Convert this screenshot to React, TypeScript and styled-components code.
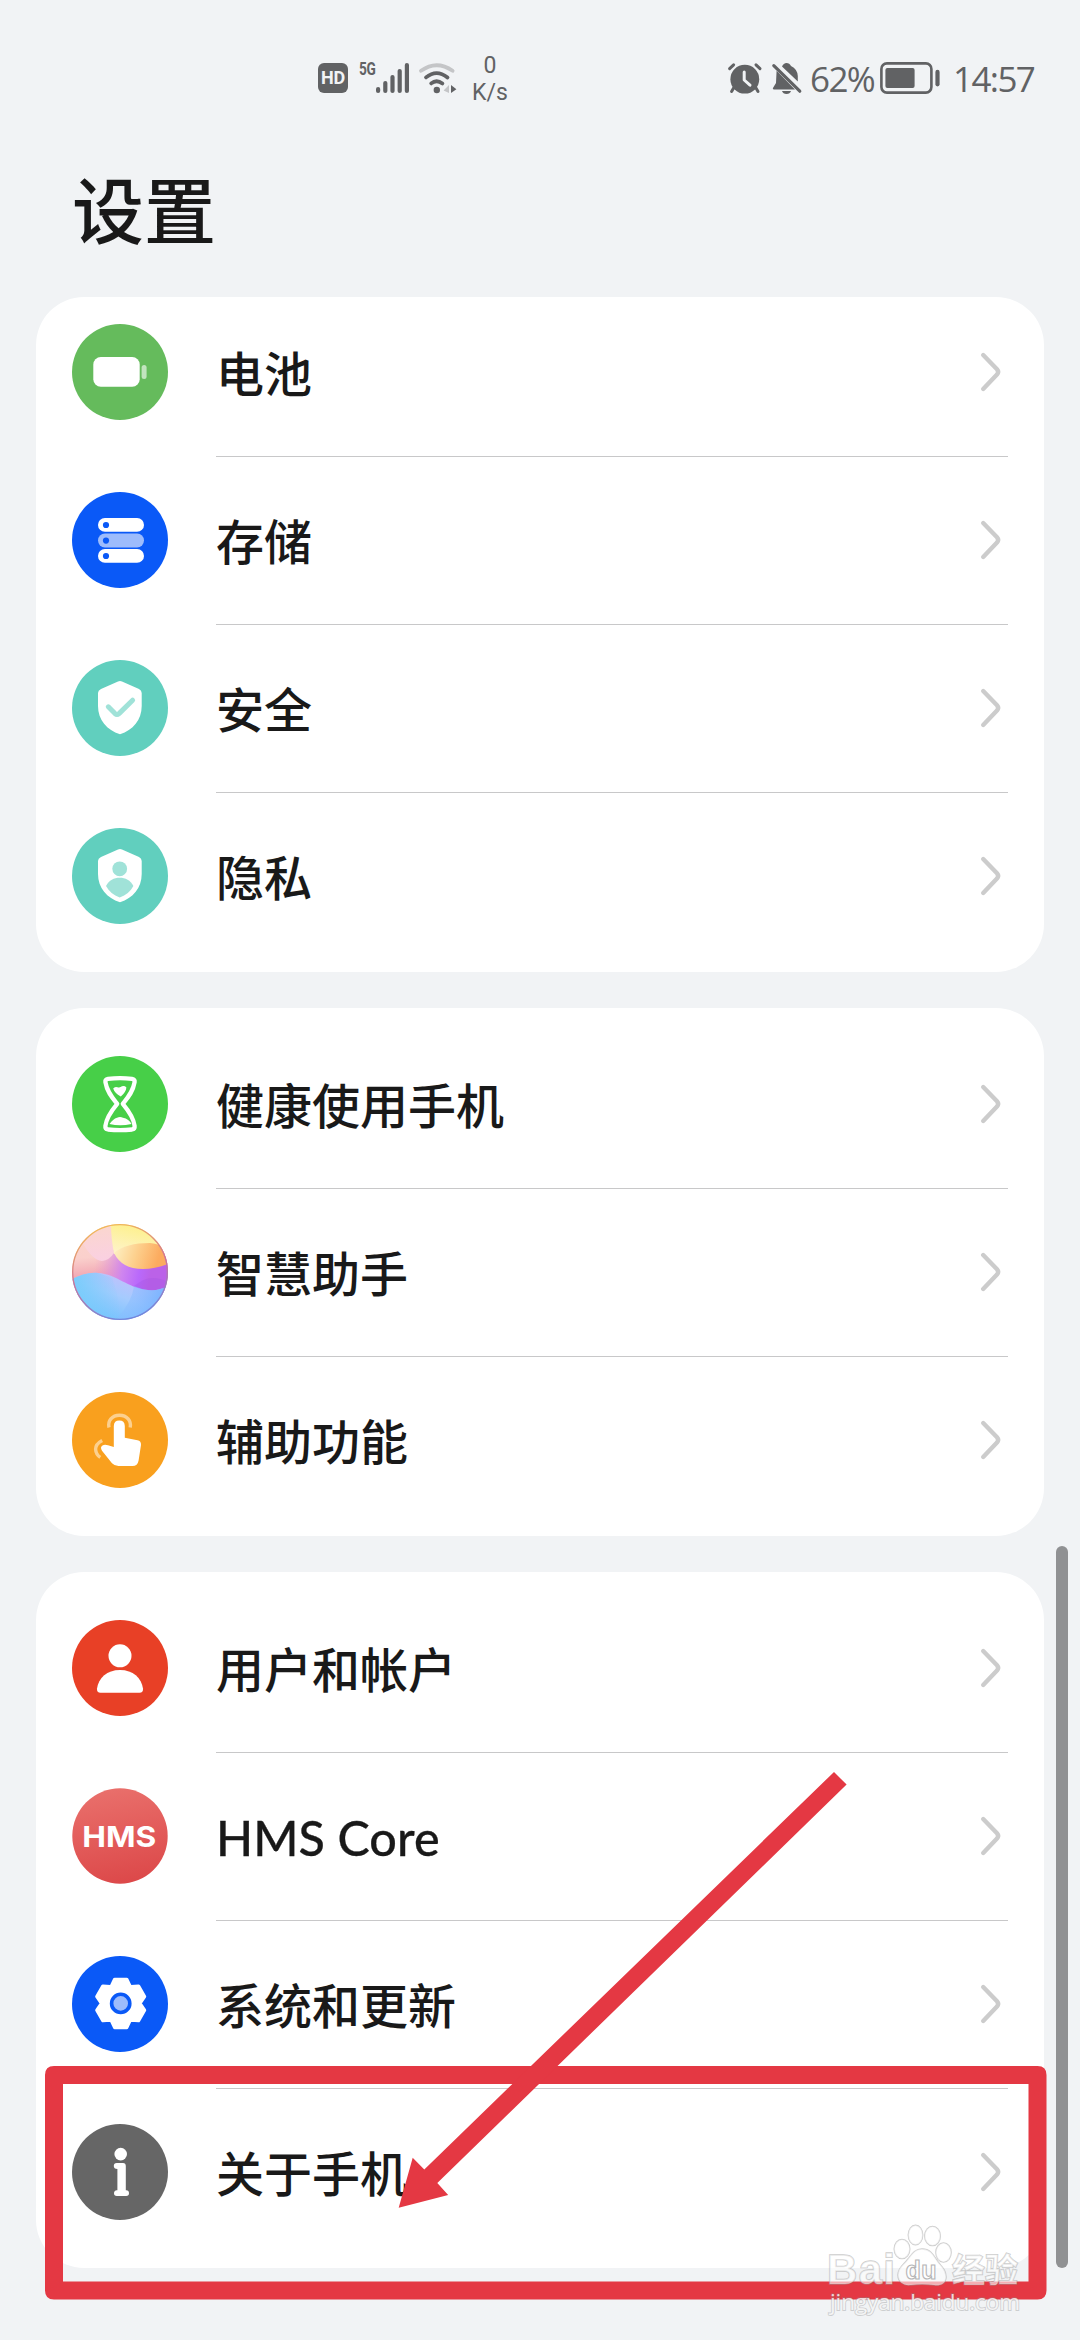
import React from 'react';
import styled, { createGlobalStyle } from 'styled-components';

const Global = createGlobalStyle`
  html, body { margin: 0; padding: 0; background: #f1f3f5; }
  * { box-sizing: border-box; }
`;

const cjk = `"Noto Sans CJK SC", sans-serif`;
const ink = '#616264';

const Screen = styled.div`
  position: relative;
  width: 1080px;
  height: 2340px;
  overflow: hidden;
  background: #f1f3f5;
  color: #191919;
  font-family: ${cjk};
`;

const StatusBar = styled.header`
  display: flex;
  align-items: center;
  justify-content: space-between;
  height: 156px;
  padding: 0 45px 0 318px;
  color: ${ink};
`;

const StatusGroup = styled.div`
  display: flex;
  align-items: center;
`;

const HdBadge = styled.span`
  display: flex;
  align-items: center;
  justify-content: center;
  width: 30px;
  height: 30px;
  border-radius: 6px;
  background: ${ink};
  color: #f1f3f5;
  font: 700 18px/30px Roboto, sans-serif;
  letter-spacing: -0.3px;
`;

const NetworkKind = styled.span`
  align-self: flex-start;
  width: 17px;
  margin: 9px 0 0 11px;
  font: 700 18px/20px Roboto, sans-serif;
  letter-spacing: -0.6px;
  transform: scaleX(0.76);
  transform-origin: left;
`;

const Speed = styled.div`
  width: 40px;
  margin-left: 13px;
  padding-top: 2px;
  text-align: center;
  font: 400 23px/27px Roboto, sans-serif;
`;

const StatusText = styled.span<{ $width: number; $gap: number }>`
  width: ${(p) => p.$width}px;
  margin-left: ${(p) => p.$gap}px;
  padding-top: 2px;
  font: 400 35px/40px "Open Sans", sans-serif;
  letter-spacing: -1.6px;
  white-space: nowrap;
`;

const Glyph = styled.svg<{ $gap?: number }>`
  display: block;
  flex: none;
  overflow: visible;
  margin-left: ${(p) => p.$gap ?? 0}px;
`;

const Title = styled.h1`
  height: 141px;
  margin: 0;
  padding: 0 0 0 72px;
  font: 500 72px/102px ${cjk};
`;

const List = styled.main`
  display: flex;
  flex-direction: column;
  gap: 36px;
  padding: 0 36px;
`;

const Card = styled.section<{ $cut?: boolean }>`
  padding: ${(p) => (p.$cut ? '0' : '12px')} 36px 12px;
  border-radius: 48px;
  background: #fff;
`;

const Row = styled.div<{ $cut?: boolean }>`
  display: flex;
  align-items: center;
  height: 168px;
  margin-top: ${(p) => (p.$cut ? '-9px' : '0')};

  &:not(:first-child) > div {
    box-shadow: inset 0 1px #c8c8c9;
  }
`;

const RowBody = styled.div`
  display: flex;
  flex: 1;
  align-items: center;
  justify-content: space-between;
  height: 168px;
  margin-left: 48px;
  padding-right: 6px;
`;

const Label = styled.span<{ $latin?: boolean }>`
  padding: ${(p) => (p.$latin ? '2px 0 0' : '0 0 3px')};
  font: ${(p) => (p.$latin ? '500 48.5px/72px Lato, sans-serif' : `500 48px/72px ${cjk}`)};
  letter-spacing: ${(p) => (p.$latin ? '0.1px' : '0')};
  -webkit-text-stroke: ${(p) => (p.$latin ? '0.3px #191919' : '0')};
`;

const ScrollThumb = styled.div`
  position: absolute;
  top: 1546px;
  right: 12px;
  width: 12px;
  height: 722px;
  border-radius: 6px;
  background: #909193;
`;

const Annotation = styled.svg`
  position: absolute;
  inset: 0;
`;

const Disc = ({ fill, children }: { fill: string; children?: React.ReactNode }) => (
  <Glyph width="96" height="96" viewBox="0 0 96 96">
    <circle cx="48" cy="48" r="48" fill={fill} />
    {children}
  </Glyph>
);

const SHIELD =
  'M46 21.5Q48 20.6 50 21.5L67 29Q69.7 30.3 69.7 33V46C69.7 60 61 70 48 74.3C35 70 26 60 26 46V33Q26 30.3 29 29Z';

const gearPoints = () => {
  const pts: string[] = [];
  for (let i = 0; i < 6; i++) {
    const mid = -90 + i * 60;
    for (const [off, r] of [[-32, 19.6], [-28, 19.6], [-14, 24.8], [14, 24.8]]) {
      const a = ((mid + off) * Math.PI) / 180;
      pts.push(`${48.7 + r * Math.cos(a)},${47.4 + r * Math.sin(a)}`);
    }
  }
  return pts.join(' ');
};

const BatteryIcon = () => (
  <Disc fill="#65bb5c">
    <rect x="21.3" y="33" width="46.4" height="29.8" rx="7.5" fill="#fff" />
    <rect x="69.6" y="41" width="5" height="14" rx="2.5" fill="#fff" opacity="0.6" />
  </Disc>
);

const StorageIcon = () => (
  <Disc fill="#0a59f7">
    {[26, 41.6, 57].map((y, i) => (
      <g key={y}>
        <rect x="26" y={y} width="46" height="13.8" rx="6.9" fill={i === 1 ? '#9dbcfc' : '#fff'} />
        <circle cx="34" cy={y + 7} r="3.1" fill="#0a59f7" />
      </g>
    ))}
  </Disc>
);

const SecurityIcon = () => (
  <Disc fill="#61cfbe">
    <path d={SHIELD} fill="#fff" />
    <path d="M36.3 46.8L43 53.6Q45 55.4 47 53.6L60.6 40.2" fill="none" stroke="#a0e2d8" strokeWidth="5" strokeLinecap="round" strokeLinejoin="round" />
  </Disc>
);

const PrivacyIcon = () => (
  <Disc fill="#61cfbe">
    <path d={SHIELD} fill="#fff" />
    <circle cx="47.7" cy="40.8" r="7.4" fill="#a0e2d8" />
    <path d="M34 58C37 52 42 49.7 47.7 49.7S58.4 52 61.4 58C58.5 63.5 54 67 47.7 69.6C41.5 67 37 63.5 34 58Z" fill="#a0e2d8" />
  </Disc>
);

const HourglassIcon = () => (
  <Disc fill="#47cf48">
    <path
      d="M36 22.8Q48 21.4 60 22.8Q63 23.3 62.6 26.2C61 36 55.5 42 50.8 47.8C56 54 61.5 61 62.6 69.8Q63 73 60 73.5Q48 74.8 36 73.5Q33 73 33.4 69.8C34.5 61 40 54 45.2 47.8C40.5 42 35 36 33.4 26.2Q33 23.3 36 22.8Z"
      fill="none" stroke="#fff" strokeWidth="4.3" strokeLinejoin="round"
    />
    <path d="M41.2 32.5Q42.5 30.4 45.5 31.2Q48 32 50 30.3Q52.5 29.4 54.4 31.4Q54 36 48.8 40.5Q42.5 37 41.2 32.5Z" fill="#fff" />
    <path d="M37.5 68Q41 63 45 61.8Q48 60 51 61.8Q57 63 59.5 68Q48 70.4 37.5 68Z" fill="#fff" />
  </Disc>
);

const AssistantIcon = () => (
  <Glyph width="96" height="96" viewBox="0 0 96 96">
    <defs>
      <clipPath id="orb"><circle cx="48" cy="48" r="48" /></clipPath>
      <linearGradient id="base" gradientUnits="userSpaceOnUse" x1="30" y1="8" x2="36" y2="60">
        <stop offset="0" stopColor="#fbd3cb" /><stop offset="0.45" stopColor="#fad0cc" />
        <stop offset="0.8" stopColor="#f2a9b4" /><stop offset="1" stopColor="#e59fc8" />
      </linearGradient>
      <linearGradient id="violet" gradientUnits="userSpaceOnUse" x1="22" y1="44" x2="78" y2="54">
        <stop offset="0" stopColor="#e79bd0" stopOpacity="0" /><stop offset="0.5" stopColor="#cf85ef" />
        <stop offset="0.8" stopColor="#b969fb" /><stop offset="1" stopColor="#bb62e8" />
      </linearGradient>
      <linearGradient id="lemon" gradientUnits="userSpaceOnUse" x1="60" y1="0" x2="52" y2="32">
        <stop offset="0" stopColor="#fdf08c" /><stop offset="1" stopColor="#fef3cb" />
      </linearGradient>
      <linearGradient id="sun" gradientUnits="userSpaceOnUse" x1="46" y1="24" x2="86" y2="36">
        <stop offset="0" stopColor="#fdebbb" /><stop offset="0.45" stopColor="#fdd08d" /><stop offset="1" stopColor="#fcab5f" />
      </linearGradient>
      <linearGradient id="petal" gradientUnits="userSpaceOnUse" x1="26" y1="4" x2="30" y2="37">
        <stop offset="0" stopColor="#fbd6cf" /><stop offset="1" stopColor="#fad0e2" />
      </linearGradient>
      <linearGradient id="sea" gradientUnits="userSpaceOnUse" x1="58" y1="50" x2="42" y2="96">
        <stop offset="0" stopColor="#c5bffc" /><stop offset="0.5" stopColor="#a5cbfe" /><stop offset="1" stopColor="#78c2fe" />
      </linearGradient>
      <linearGradient id="foam" gradientUnits="userSpaceOnUse" x1="2" y1="70" x2="48" y2="64">
        <stop offset="0" stopColor="#79cdfb" /><stop offset="1" stopColor="#79cdfb" stopOpacity="0" />
      </linearGradient>
      <linearGradient id="reef" gradientUnits="userSpaceOnUse" x1="50" y1="74" x2="86" y2="84">
        <stop offset="0" stopColor="#8dbdff" stopOpacity="0.35" /><stop offset="1" stopColor="#72b2ff" stopOpacity="0.85" />
      </linearGradient>
      <linearGradient id="rim" x1="0.3" y1="0" x2="0.6" y2="1">
        <stop offset="0" stopColor="#f3bd55" /><stop offset="0.5" stopColor="#cf7197" /><stop offset="1" stopColor="#7187dd" />
      </linearGradient>
    </defs>
    <g clipPath="url(#orb)">
      <rect width="96" height="96" fill="url(#base)" />
      <rect y="26" width="96" height="44" fill="url(#violet)" />
      <path d="M10 18Q20 36 30 37Q37 36.500 42 29Q39 14 41 0H20Z" fill="url(#petal)" />
      <path d="M39 0H96V30L42 30Q39 14 39 0Z" fill="url(#lemon)" />
      <path d="M42 29C50 22 62 19 78 19Q88 20 96 25V40C78 47 62 46 53 41Q46 37 42 29Z" fill="url(#sun)" />
      <path d="M0 55C9 51 17 48 26 49C45 50 55 64 76 66Q87 67 96 62V96H0Z" fill="url(#sea)" />
      <path d="M0 55C9 51 17 48 26 49L40 54Q50 80 46 96H0Z" fill="url(#foam)" />
      <path d="M62 62Q60 78 45 94L48 96H84L96 62Q87 67 76 66Q69 65 62 62Z" fill="url(#reef)" />
      <path d="M68 58Q80 50 96 58V62Q87 67 76 66Q69 65 62 62Z" fill="#9a4fe0" opacity="0.25" />
    </g>
    <circle cx="48" cy="48" r="47.3" fill="none" stroke="url(#rim)" strokeWidth="1.3" />
  </Glyph>
);

const AccessibilityIcon = () => (
  <Disc fill="#f9a01e">
    <path d="M37 35.5C35.5 29 40 23.3 47.5 23.3S59.5 29 58.2 35.5" fill="none" stroke="#fcd08f" strokeWidth="3.4" />
    <path d="M30.2 48.4Q23.6 52 23.6 57Q23.8 62.5 28.3 65.4" fill="none" stroke="#fcd08f" strokeWidth="3.4" />
    <path
      d="M41.8 34Q42 28.6 47.3 28.6T52.8 34V45.8L65.5 48.2Q69.3 49 69 53L66.6 68.4Q65.6 74 60.5 74H46.5Q42.5 74 40 71.3L30 58.7Q27.8 55 30.5 53.5Q32.5 52 36 53.2L41.8 55Z"
      fill="#fff"
    />
  </Disc>
);

const UserIcon = () => (
  <Disc fill="#e84026">
    <circle cx="48" cy="35.8" r="11.5" fill="#fff" />
    <path d="M48 50C61 50 69.5 58 71 68.5Q71.3 72.8 67.5 72.8H28.5Q24.7 72.8 25 68.5C26.5 58 35 50 48 50Z" fill="#fff" />
  </Disc>
);

const HmsIcon = () => (
  <Glyph width="96" height="96" viewBox="0 0 96 96">
    <defs>
      <linearGradient id="hms" x1="0.4" y1="0" x2="0.6" y2="1">
        <stop offset="0" stopColor="#e96f6b" /><stop offset="1" stopColor="#dc4849" />
      </linearGradient>
    </defs>
    <circle cx="48" cy="48" r="47.7" fill="url(#hms)" />
    <text x="10.3" y="58.6" fill="#fff" fontFamily="Inter, sans-serif" fontWeight="700" fontSize="28.5" textLength="74" lengthAdjust="spacingAndGlyphs">HMS</text>
  </Glyph>
);

const SystemIcon = () => (
  <Disc fill="#0a59f7">
    <polygon points={gearPoints()} fill="#fff" stroke="#fff" strokeWidth="3.4" strokeLinejoin="round" />
    <circle cx="48.7" cy="47.4" r="9.1" fill="#9dbcfc" stroke="#0a59f7" strokeWidth="3.6" />
  </Disc>
);

const AboutIcon = () => (
  <Disc fill="#666">
    <circle cx="48.7" cy="30.1" r="6.3" fill="#fff" />
    <path
      d="M44.7 39H51Q53.8 39 53.8 42V66.3H54.2Q57 66.5 57 69.2T54.2 72H44.8Q42 71.8 42 69.2T44.8 66.3H45.4V45Q41.8 45 41.8 42T44.7 39Z"
      fill="#fff"
    />
  </Disc>
);

const Chevron = () => (
  <Glyph width="22" height="40" viewBox="0 0 22 40">
    <path d="M3.2 3L17 17.3Q19.3 20 17 22.6L3.2 37" fill="none" stroke="#ccc" strokeWidth="4.4" strokeLinecap="round" strokeLinejoin="round" />
  </Glyph>
);

type Entry = { label: string; icon: React.ReactNode; latin?: boolean };

const groups: Entry[][] = [
  [
    { label: '电池', icon: <BatteryIcon /> },
    { label: '存储', icon: <StorageIcon /> },
    { label: '安全', icon: <SecurityIcon /> },
    { label: '隐私', icon: <PrivacyIcon /> },
  ],
  [
    { label: '健康使用手机', icon: <HourglassIcon /> },
    { label: '智慧助手', icon: <AssistantIcon /> },
    { label: '辅助功能', icon: <AccessibilityIcon /> },
  ],
  [
    { label: '用户和帐户', icon: <UserIcon /> },
    { label: 'HMS Core', icon: <HmsIcon />, latin: true },
    { label: '系统和更新', icon: <SystemIcon /> },
    { label: '关于手机', icon: <AboutIcon /> },
  ],
];

const SignalGlyph = () => (
  <Glyph width="34" height="30" viewBox="0 0 34 30">
    {[[0, 24], [7.2, 18], [14.4, 12], [21.6, 6], [28.8, 0]].map(([x, y]) => (
      <rect key={x} x={x} y={y} width="4.2" height={30 - y} rx="2.1" fill={ink} />
    ))}
  </Glyph>
);

const WifiGlyph = () => (
  <Glyph $gap={9} width="38" height="30" viewBox="0 0 38 30" fill="none" strokeWidth="3.8" strokeLinecap="round">
    <path d="M2 7.8Q17.5-3.4 33.6 7.8" stroke="#c4c5c7" />
    <path d="M7 14.4Q17.5 5.8 28.5 14.4" stroke={ink} />
    <path d="M12.2 20.4Q17.5 16 23.4 20.4" stroke={ink} />
    <circle cx="17.8" cy="27" r="3.2" fill={ink} />
    <path d="M30 22V30L24.6 27.5Z" fill="#c4c5c7" />
    <path d="M32 22L37.4 26.2L32 30Z" fill={ink} />
  </Glyph>
);

const AlarmGlyph = () => (
  <Glyph width="34" height="31" viewBox="0 0 34 31">
    <g stroke={ink} strokeWidth="3" strokeLinecap="round">
      <path d="M1.6 5.6L5.6 1.8M32 5.6L28 1.8M5.6 25L3.6 28.4M28 25L30 28.4" />
    </g>
    <circle cx="16.8" cy="16.2" r="14.4" fill={ink} />
    <path d="M16.2 9V17L22 22.2" fill="none" stroke="#f1f3f5" strokeWidth="3" strokeLinecap="round" strokeLinejoin="round" />
  </Glyph>
);

const MutedBellGlyph = () => (
  <Glyph $gap={10} width="30" height="31" viewBox="0 0 30 31">
    <path d="M10 3.5Q11.5 0 14.5 0T19 3Q25.4 6 25.8 13V18.4Z" fill={ink} />
    <path d="M4.6 7.8L23 26.6H1.6Q0 25.6 1.4 24.2L4 20Z" fill={ink} />
    <path d="M10 28H19Q18 31 14.5 31T10 28Z" fill={ink} />
    <path d="M1.8 2.6L27.8 28.2" stroke={ink} strokeWidth="3.2" strokeLinecap="round" />
  </Glyph>
);

const ChargeGlyph = () => (
  <Glyph $gap={7} width="61" height="32" viewBox="0 0 61 32">
    <rect x="1.4" y="1.4" width="50" height="29.2" rx="5.5" fill="none" stroke={ink} strokeWidth="2.6" />
    <rect x="5.4" y="6" width="29.2" height="20" rx="2" fill={ink} />
    <rect x="55.4" y="7.8" width="4.2" height="16.6" rx="2.1" fill={ink} />
  </Glyph>
);

const Watermark = () => (
  <g>
    <g fill="#fff" fillOpacity="0.6" stroke="#999" strokeOpacity="0.5" strokeWidth="1.4" paintOrder="stroke">
      <text x="827" y="2284" fontFamily="Liberation Sans, sans-serif" fontWeight="700" fontSize="42" textLength="68">Bai</text>
      <ellipse cx="902" cy="2249" rx="7.8" ry="9.6" />
      <ellipse cx="915.5" cy="2235" rx="7.2" ry="9.8" />
      <ellipse cx="932.5" cy="2236" rx="7.8" ry="9.6" />
      <ellipse cx="943.5" cy="2252.5" rx="7.6" ry="9.6" />
      <path d="M922 2249C932 2249 934 2257 938 2262C942 2267 946 2270 946 2277C946 2284 940 2286 934 2285C926 2284 918 2284 911 2285C904 2286 898 2282 898 2275C898 2267 904 2265 908 2259C912 2254 915 2249 922 2249Z" />
      <text x="952" y="2282" fontFamily={cjk} fontWeight="700" fontSize="33">经验</text>
    </g>
    <text x="905.5" y="2279" fill="#fff" stroke="#b5b5b6" strokeWidth="1.1" fontFamily="Liberation Sans, sans-serif" fontWeight="700" fontSize="25" textLength="31">du</text>
    <text x="830" y="2310" fill="#fff" fillOpacity="0.8" stroke="#888" strokeOpacity="0.35" strokeWidth="1.8" paintOrder="stroke" fontFamily="Open Sans, sans-serif" fontSize="22.5" textLength="190">jingyan.baidu.com</text>
  </g>
);

export default function App() {
  return (
    <Screen>
      <Global />
      <StatusBar>
        <StatusGroup>
          <HdBadge>HD</HdBadge>
          <NetworkKind>5G</NetworkKind>
          <SignalGlyph />
          <WifiGlyph />
          <Speed>
            <div>0</div>
            <div>K/s</div>
          </Speed>
        </StatusGroup>
        <StatusGroup>
          <AlarmGlyph />
          <MutedBellGlyph />
          <StatusText $width={63} $gap={8}>62%</StatusText>
          <ChargeGlyph />
          <StatusText $width={82} $gap={12}>14:57</StatusText>
        </StatusGroup>
      </StatusBar>
      <Title>设置</Title>
      <List>
        {groups.map((entries, g) => (
          <Card key={g} $cut={g === 0}>
            {entries.map((e, i) => (
              <Row key={e.label} $cut={g === 0 && i === 0}>
                {e.icon}
                <RowBody>
                  <Label $latin={e.latin}>{e.label}</Label>
                  <Chevron />
                </RowBody>
              </Row>
            ))}
          </Card>
        ))}
      </List>
      <ScrollThumb />
      <Annotation width="1080" height="2340" viewBox="0 0 1080 2340">
        <path
          fill="#e43843" fillRule="evenodd"
          d="M54 2066H1037.5Q1046.5 2066 1046.5 2075V2290.5Q1046.5 2299.5 1037.5 2299.5H54Q45 2299.5 45 2290.5V2075Q45 2066 54 2066ZM63 2084V2281.5H1028.5V2084Z"
        />
        <path fill="#e43843" d="M834 1772L846.6 1784.6L437.3 2183L448.2 2195L398.7 2207.7L412.7 2157.7L424.3 2169.5Z" />
        <Watermark />
      </Annotation>
    </Screen>
  );
}
